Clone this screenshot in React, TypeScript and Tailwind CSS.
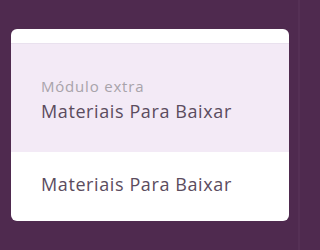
export default function App() {
  return (
    <div className="w-full h-[250px] bg-[#4f2a4f]">
      <div className="w-[300px] h-[250px] flex" style={{ fontFamily: '"Open Sans", "Noto Sans", sans-serif' }}>
        <div className="ml-[11px] mt-[29px] w-[278px] h-[192px] bg-white rounded-[6px] overflow-hidden flex flex-col">
          <div className="h-[15px] border-b border-[#e9e1ee]" />
          <div className="h-[108px] bg-[#f3eaf6] pl-[30px] pt-[32px] flex flex-col">
            <div className="text-[15px] leading-[20px] tracking-[0.8px] text-[#a8a3aa]">Módulo extra</div>
            <div className="text-[18px] leading-[24px] tracking-[0.6px] text-[#5b4c5e] mt-[3px]">Materiais Para Baixar</div>
          </div>
          <div className="pl-[30px] pt-[20px]">
            <div className="text-[18px] leading-[24px] tracking-[0.6px] text-[#5b4c5e]">Materiais Para Baixar</div>
          </div>
        </div>
        <div className="ml-auto w-[2px] h-full bg-[#553055]" />
      </div>
    </div>
  );
}
